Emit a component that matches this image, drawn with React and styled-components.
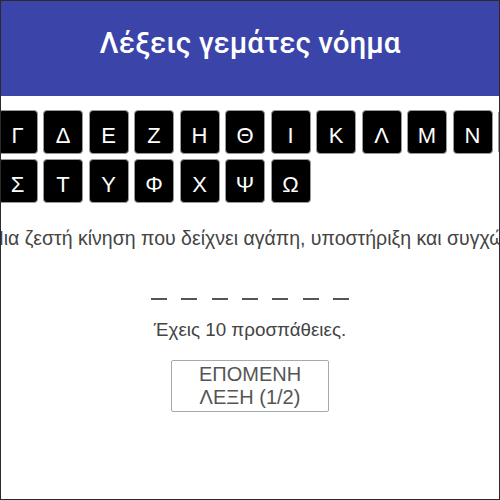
import React from 'react'
import styled, { createGlobalStyle } from 'styled-components'

const GlobalStyle = createGlobalStyle`
  body {
    margin: 0;
    background: #fff;
    font-family: "Liberation Sans", Arial, sans-serif;
  }
`

const Frame = styled.div`
  width: 500px;
  height: 500px;
  box-sizing: border-box;
  border: 1px solid #2b2b2b;
  overflow: hidden;
  display: flex;
  flex-direction: column;
  align-items: stretch;
`

const Header = styled.header`
  flex: 0 0 95px;
  background: #3b45a9;
  color: #fff;
  display: flex;
  align-items: center;
  justify-content: center;
  padding-bottom: 12px;
  box-sizing: border-box;
  font-family: Roboto, "Liberation Sans", sans-serif;
  font-weight: 500;
  font-size: 29.5px;
`

const Center = styled.div`
  display: flex;
  justify-content: center;
  margin-top: ${props => props.top || 0}px;
`

const Keys = styled.div`
  flex: 0 0 687px;
  display: flex;
  flex-wrap: wrap;
  column-gap: 5.5px;
  row-gap: 5px;
`

const Key = styled.button`
  width: 40px;
  height: 44px;
  padding: 0;
  background: #000;
  color: #fff;
  border: 1px solid #9a9a9a;
  border-radius: 4px;
  font-family: "Liberation Sans", Arial, sans-serif;
  font-size: 22px;
  line-height: 44px;
  padding-top: 3px;
  box-sizing: border-box;
`

const Hint = styled.p`
  margin: 0;
  padding-left: 40px;
  flex: none;
  white-space: nowrap;
  color: #444;
  font-size: 19.5px;
`

const Blanks = styled.div`
  display: flex;
  gap: 14.3px;
`

const Blank = styled.span`
  width: 16px;
  height: 2px;
  background: #555;
`

const Tries = styled.p`
  margin: 0;
  color: #444;
  font-size: 18.8px;
`

const NextButton = styled.button`
  width: 158px;
  height: 52px;
  padding: 1px 6px;
  background: #fff;
  border: 1px solid #a8a8a8;
  border-radius: 2px;
  color: #555;
  font-family: "Liberation Sans", Arial, sans-serif;
  font-size: 20px;
  line-height: 23px;
`

const letters = 'ΑΒΓΔΕΖΗΘΙΚΛΜΝΞΟΠΡΣΤΥΦΧΨΩ'.split('')

export default function App() {
  return (
    <Frame>
      <GlobalStyle />
      <Header>Λέξεις γεμάτες νόημα</Header>
      <Center top={14}>
        <Keys>
          {letters.map(l => <Key key={l}>{l}</Key>)}
        </Keys>
      </Center>
      <Center top={24}>
        <Hint>Μια ζεστή κίνηση που δείχνει αγάπη, υποστήριξη και συγχώρεση.</Hint>
      </Center>
      <Center top={48}>
        <Blanks>
          {[0, 1, 2, 3, 4, 5, 6].map(i => <Blank key={i} />)}
        </Blanks>
      </Center>
      <Center top={19}>
        <Tries>Έχεις 10 προσπάθειες.</Tries>
      </Center>
      <Center top={19}>
        <NextButton>ΕΠΟΜΕΝΗ ΛΕΞΗ (1/2)</NextButton>
      </Center>
    </Frame>
  )
}
